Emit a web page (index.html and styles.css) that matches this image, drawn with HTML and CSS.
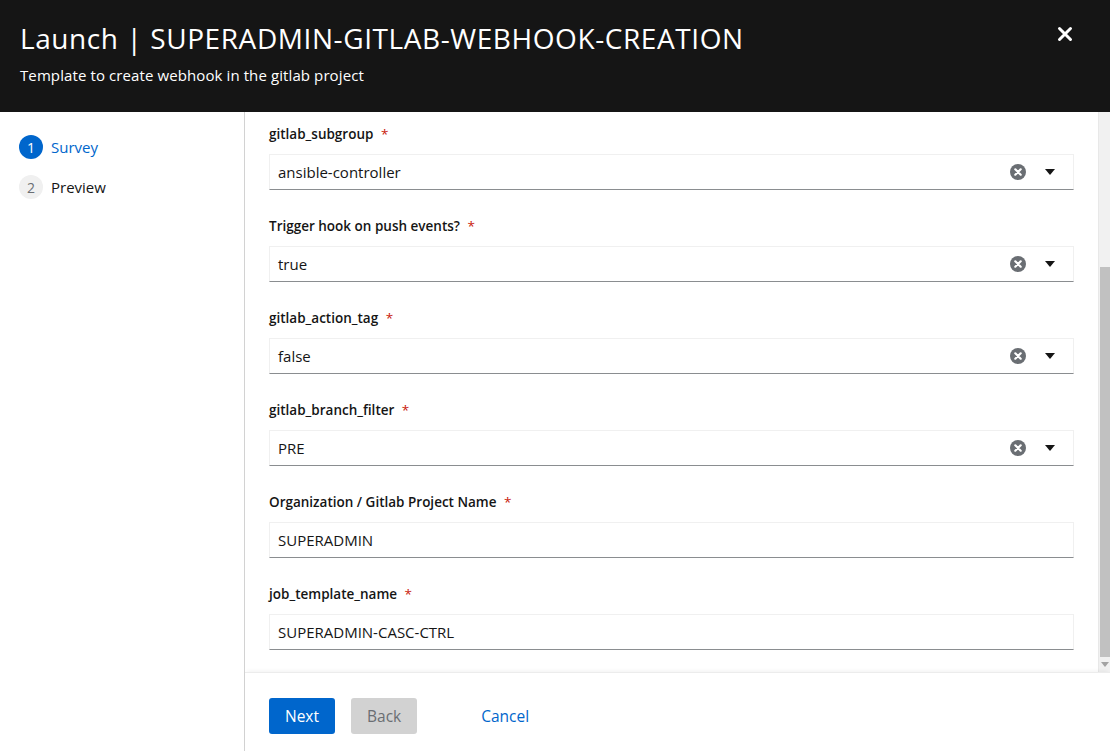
FILE: index.html
```html
<!DOCTYPE html>
<html>
<head>
<meta charset="utf-8">
<link rel="stylesheet" href="styles.css">
</head>
<body>
<div class="modal">
  <header class="header">
    <div class="titles">
      <h1 class="title">Launch | SUPERADMIN-GITLAB-WEBHOOK-CREATION</h1>
      <p class="subtitle">Template to create webhook in the gitlab project</p>
    </div>
    <button class="close" aria-label="Close">
      <svg width="16" height="16" viewBox="0 0 16 16"><path d="M2.5 2.5 L13.5 13.5 M13.5 2.5 L2.5 13.5" stroke="#fff" stroke-width="3" stroke-linecap="round"/></svg>
    </button>
  </header>
  <div class="body">
    <nav class="nav">
      <div class="step current"><span class="num">1</span><span class="label">Survey</span></div>
      <div class="step"><span class="num">2</span><span class="label">Preview</span></div>
    </nav>
    <div class="main">
      <div class="scroller">
        <div class="form">
          <div class="group">
            <div class="flabel">gitlab_subgroup <span class="req">*</span></div>
            <div class="control select"><span class="val">ansible-controller</span><span class="icons"><svg class="clear" width="16" height="16" viewBox="0 0 16 16"><circle cx="8" cy="8" r="8" fill="#6a6e73"/><path d="M5.3 5.3 L10.7 10.7 M10.7 5.3 L5.3 10.7" stroke="#fff" stroke-width="2.2" stroke-linecap="round"/></svg><svg class="caret" width="10" height="6" viewBox="0 0 10 6"><path d="M0 0 H10 L5 6 Z" fill="#151515"/></svg></span></div>
          </div>
          <div class="group">
            <div class="flabel">Trigger hook on push events? <span class="req">*</span></div>
            <div class="control select"><span class="val">true</span><span class="icons"><svg class="clear" width="16" height="16" viewBox="0 0 16 16"><circle cx="8" cy="8" r="8" fill="#6a6e73"/><path d="M5.3 5.3 L10.7 10.7 M10.7 5.3 L5.3 10.7" stroke="#fff" stroke-width="2.2" stroke-linecap="round"/></svg><svg class="caret" width="10" height="6" viewBox="0 0 10 6"><path d="M0 0 H10 L5 6 Z" fill="#151515"/></svg></span></div>
          </div>
          <div class="group">
            <div class="flabel">gitlab_action_tag <span class="req">*</span></div>
            <div class="control select"><span class="val">false</span><span class="icons"><svg class="clear" width="16" height="16" viewBox="0 0 16 16"><circle cx="8" cy="8" r="8" fill="#6a6e73"/><path d="M5.3 5.3 L10.7 10.7 M10.7 5.3 L5.3 10.7" stroke="#fff" stroke-width="2.2" stroke-linecap="round"/></svg><svg class="caret" width="10" height="6" viewBox="0 0 10 6"><path d="M0 0 H10 L5 6 Z" fill="#151515"/></svg></span></div>
          </div>
          <div class="group">
            <div class="flabel">gitlab_branch_filter <span class="req">*</span></div>
            <div class="control select"><span class="val">PRE</span><span class="icons"><svg class="clear" width="16" height="16" viewBox="0 0 16 16"><circle cx="8" cy="8" r="8" fill="#6a6e73"/><path d="M5.3 5.3 L10.7 10.7 M10.7 5.3 L5.3 10.7" stroke="#fff" stroke-width="2.2" stroke-linecap="round"/></svg><svg class="caret" width="10" height="6" viewBox="0 0 10 6"><path d="M0 0 H10 L5 6 Z" fill="#151515"/></svg></span></div>
          </div>
          <div class="group">
            <div class="flabel">Organization / Gitlab Project Name <span class="req">*</span></div>
            <div class="control"><span class="val">SUPERADMIN</span></div>
          </div>
          <div class="group">
            <div class="flabel">job_template_name <span class="req">*</span></div>
            <div class="control"><span class="val">SUPERADMIN-CASC-CTRL</span></div>
          </div>
        </div>
        <div class="scrollbar">
          <div class="track-top"></div>
          <div class="thumb"></div>
          <div class="arrow"><svg width="8" height="5" viewBox="0 0 8 5"><path d="M0 0 H8 L4 5 Z" fill="#a3a3a3"/></svg></div>
        </div>
      </div>
      <footer class="footer">
        <button class="btn primary">Next</button>
        <button class="btn disabled">Back</button>
        <button class="btn link">Cancel</button>
      </footer>
    </div>
  </div>
</div>
</body>
</html>
```

FILE: styles.css
```css
* { box-sizing: border-box; }
html, body { margin: 0; padding: 0; }
body {
  width: 1110px;
  height: 751px;
  overflow: hidden;
  font-family: "Open Sans", "Liberation Sans", sans-serif;
  color: #151515;
  background: #fff;
}
.modal { display: flex; flex-direction: column; height: 751px; }
.header {
  height: 112px;
  background: #151515;
  display: flex;
  justify-content: space-between;
  align-items: flex-start;
  padding: 22px 20px 0 20px;
}
.title {
  margin: 0;
  color: #fff;
  font-size: 28px;
  font-weight: 400;
  line-height: 32px;
  letter-spacing: 0.58px;
}
.subtitle {
  margin: 11px 0 0;
  color: #fff;
  font-size: 15px;
  line-height: 20px;
  letter-spacing: 0.1px;
}
.close {
  background: none;
  border: 0;
  padding: 0;
  margin: 4px 17px 0 0;
  width: 16px;
  height: 16px;
  display: flex;
}
.body { flex: 1; display: flex; min-height: 0; }
.nav {
  width: 245px;
  border-right: 1px solid #d2d2d2;
  padding: 23px 0 0 19px;
  display: flex;
  flex-direction: column;
  gap: 16px;
}
.step { display: flex; align-items: center; gap: 8px; height: 24px; }
.num {
  width: 24px; height: 24px; border-radius: 50%;
  background: #f0f0f0; color: #6a6e73;
  font-size: 14px;
  display: flex; align-items: center; justify-content: center;
}
.step .label { font-size: 15px; color: #151515; }
.step.current .num { background: #06c; color: #fff; }
.step.current .label { color: #06c; }
.main { flex: 1; display: flex; flex-direction: column; min-width: 0; }
.scroller { flex: 1; display: flex; min-height: 0; }
.form {
  flex: 1;
  padding: 12px 24px 0 24px;
  display: flex;
  flex-direction: column;
  gap: 26px;
}
.group { display: flex; flex-direction: column; }
.flabel {
  font-size: 13.5px;
  font-weight: 600;
  line-height: 20px;
  margin-bottom: 10px;
}
.req { color: #c9190b; margin-left: 4px; font-weight: 400; }
.control {
  height: 36px;
  border: 1px solid #f0f0f0;
  border-bottom-color: #8a8d90;
  display: flex;
  align-items: center;
  padding: 0 8px;
  font-size: 15px;
}
.val { flex: 1; padding-bottom: 1px; }
.icons { display: flex; align-items: center; }
.clear { margin-right: 19px; }
.caret { margin-right: 10px; }
.scrollbar {
  width: 12px;
  display: flex;
  flex-direction: column;
  background: #f1f1f1;
  border-left: 1px solid #e8e8e8;
}
.track-top { height: 155px; }
.thumb { height: 390px; background: #c1c1c1; margin-left: 1px; }
.arrow { height: 15px; display: flex; justify-content: center; align-items: center; }
.footer {
  height: 79px;
  border-top: 1px solid #ececec;
  box-shadow: 0 -3px 4px -2px rgba(0,0,0,0.06);
  display: flex;
  align-items: center;
  padding: 7px 0 0 24px;
  gap: 16px;
}
.btn {
  font-family: inherit;
  font-size: 15.5px;
  height: 36px;
  padding: 0 16px;
  border: 0;
  border-radius: 3px;
}
.primary { background: #06c; color: #fff; }
.disabled { background: #d2d2d2; color: #6a6e73; }
.link { background: none; color: #06c; margin-left: 32px; }
```
